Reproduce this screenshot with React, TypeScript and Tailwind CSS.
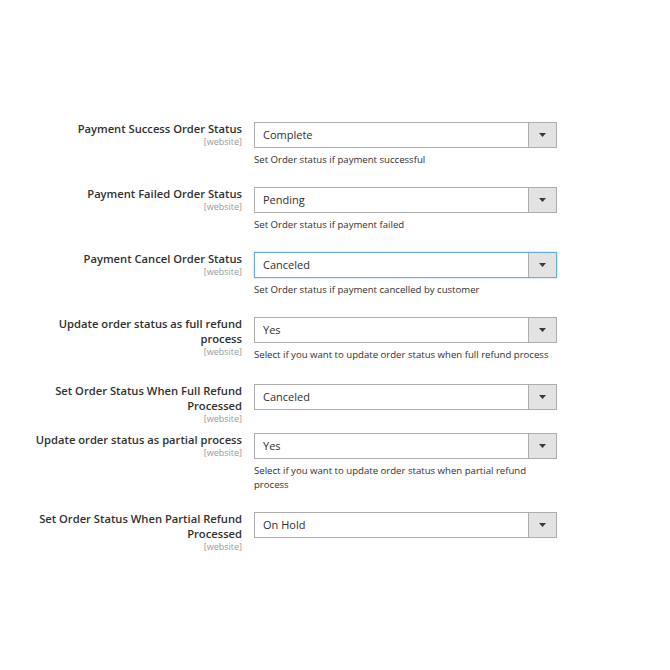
import React from "react";

type Row = {
  label: string;
  value: string;
  note?: string;
  focused?: boolean;
  extra?: boolean;
};

const rows: Row[] = [
  { label: "Payment Success Order Status", value: "Complete", note: "Set Order status if payment successful" },
  { label: "Payment Failed Order Status", value: "Pending", note: "Set Order status if payment failed" },
  { label: "Payment Cancel Order Status", value: "Canceled", note: "Set Order status if payment cancelled by customer", focused: true },
  { label: "Update order status as full refund process", value: "Yes", note: "Select if you want to update order status when full refund process", extra: true },
  { label: "Set Order Status When Full Refund Processed", value: "Canceled" },
  { label: "Update order status as partial process", value: "Yes", note: "Select if you want to update order status when partial refund process" },
  { label: "Set Order Status When Partial Refund Processed", value: "On Hold" },
];

function Select({ value, focused }: { value: string; focused?: boolean }) {
  return (
    <div
      className={
        focused
          ? "flex h-[26px] w-[303px] items-stretch border border-[#6aa9e2] bg-white shadow-[0_0_2px_#a9cdf0]"
          : "flex h-[26px] w-[303px] items-stretch border border-[#adadad] bg-white"
      }
    >
      <div className="flex flex-1 items-center pl-[8px] text-[11px] text-[#303030]">{value}</div>
      <div className="flex w-[28px] items-center justify-center border-l border-[#adadad] bg-[#e3e3e3]">
        <svg width="7" height="4" viewBox="0 0 7 4">
          <path d="M0 0 H7 L3.5 4 Z" fill="#41362f" />
        </svg>
      </div>
    </div>
  );
}

export default function App() {
  return (
    <div
      className="h-[670px] w-[670px] bg-white pt-[122px]"
      style={{ fontFamily: '"Open Sans", "Noto Sans", sans-serif' }}
    >
      <div className="flex flex-col gap-[9px]">
        {rows.map((r, i) => (
          <div key={i} className="flex items-start">
            <div className="ml-[30px] mr-[12px] w-[212px] text-right">
              <div className="-mt-[1px] text-[11.2px] font-semibold leading-[15px] text-[#303030]">{r.label}</div>
              <div className="text-[9px] leading-[11px] text-[#999999]">[website]</div>
            </div>
            <div className="flex w-[303px] flex-col">
              <Select value={r.value} focused={r.focused} />
              {r.note && (
                <div
                  className={
                    r.extra
                      ? "mb-[13px] mt-[5px] text-[9.6px] leading-[14px] text-[#303030]"
                      : "mb-[11px] mt-[5px] text-[9.6px] leading-[14px] text-[#303030]"
                  }
                >
                  {r.note}
                </div>
              )}
            </div>
          </div>
        ))}
      </div>
    </div>
  );
}
